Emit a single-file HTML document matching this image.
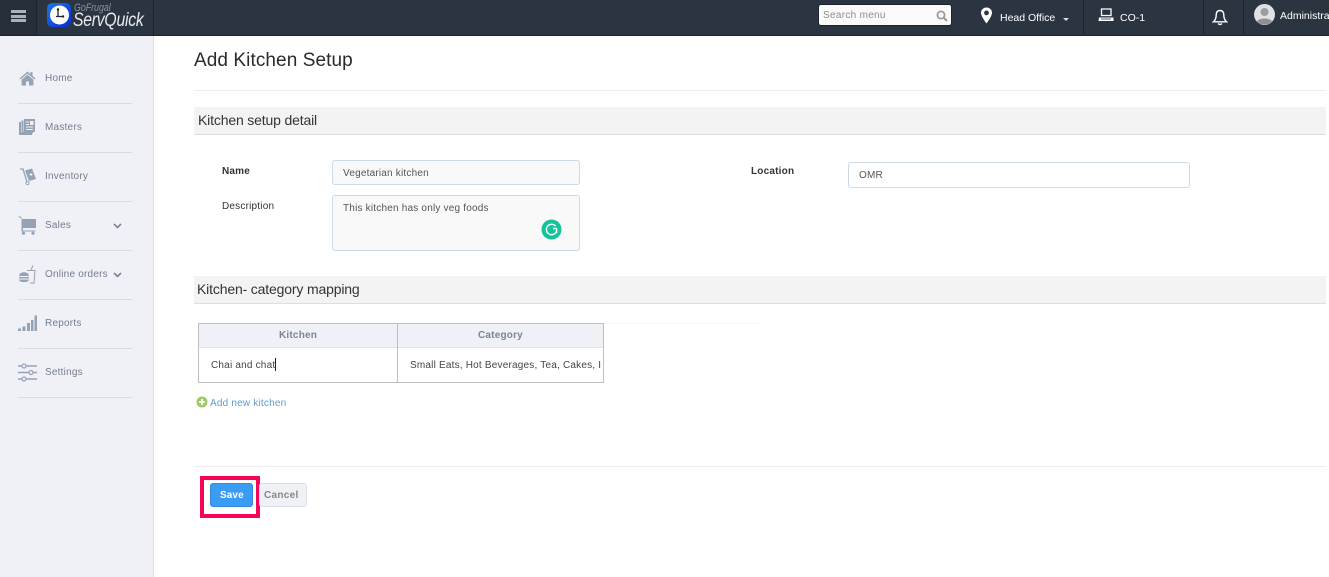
<!DOCTYPE html>
<html><head><meta charset="utf-8"><style>
html,body{margin:0;padding:0;width:1329px;height:577px;overflow:hidden;background:#fff;font-family:"Liberation Sans",sans-serif}
.a{position:absolute;white-space:nowrap}
.box{position:absolute;box-sizing:border-box}
.nav{position:absolute;left:45px;margin-top:1px;font-size:10px;letter-spacing:.22px;color:#747d90;line-height:12px;white-space:nowrap}
.sep{position:absolute;left:18px;width:114px;height:1px;background:#d9dde3}
.t{margin-top:1px;font-size:10px;letter-spacing:.2px;line-height:12px;color:#444}
.h{font-size:14px;letter-spacing:-.16px;line-height:16px;color:#333}
svg{position:absolute;overflow:visible}
</style></head><body>
<!-- top bar -->
<div class="box" style="left:0;top:0;width:1329px;height:36px;background:#2b3542;border-bottom:1px solid #1c232c"></div>
<div class="box" style="left:0;top:0;width:37px;height:35px;background:#252e39;border-right:1px solid #1c232c"></div>
<div class="box" style="left:153px;top:0;width:1px;height:35px;background:#1c232c"></div>
<div class="box" style="left:11px;top:10px;width:15px;height:3px;background:#a9b0b8"></div>
<div class="box" style="left:11px;top:14.5px;width:15px;height:3px;background:#a9b0b8"></div>
<div class="box" style="left:11px;top:19px;width:15px;height:3px;background:#a9b0b8"></div>
<div class="box" style="left:47px;top:3px;width:24px;height:24px;border-radius:5px;background:linear-gradient(135deg,#1b78e8,#0a2ad0)"></div>
<svg style="left:47px;top:3px" width="24" height="24" viewBox="0 0 24 24"><circle cx="12.5" cy="12" r="9.5" fill="#fff"/><path d="M11 6.5V13.5H16M9 13.5H13" stroke="#222" stroke-width="1.3" fill="none"/><circle cx="11" cy="6.5" r="1.2" fill="#222"/><circle cx="16" cy="13.5" r="1.2" fill="#222"/></svg>
<div class="a" style="left:74px;top:2px;font-size:11px;font-style:italic;color:#8b939c;line-height:13px;transform:scaleX(.8);transform-origin:0 0">GoFrugal</div>
<div class="a" style="left:73px;top:10px;font-size:19px;font-style:italic;color:#e8eaec;line-height:22px;letter-spacing:-.3px;transform:scaleX(.83);transform-origin:0 0">ServQuick</div>
<div class="box" style="left:818px;top:4px;width:134px;height:22px;background:#fafafa;border:1px solid #1c232c;border-radius:3px"></div>
<div class="a" style="left:823px;top:10px;font-size:10px;letter-spacing:.3px;line-height:12px;color:#8d8d8d">Search menu</div>
<svg style="left:936px;top:10px" width="12" height="12" viewBox="0 0 12 12"><circle cx="5" cy="5" r="3.6" fill="none" stroke="#999" stroke-width="1.7"/><path d="M7.6 7.6L11 11" stroke="#999" stroke-width="2"/></svg>
<svg style="left:980px;top:7px" width="13" height="17" viewBox="0 0 13 17"><path fill-rule="evenodd" fill="#fff" d="M6.5 0.5C3.2 0.5 1 3 1 5.8C1 9.5 6.5 16.5 6.5 16.5S12 9.5 12 5.8C12 3 9.8 0.5 6.5 0.5ZM6.5 3.5A2.4 2.4 0 1 1 6.5 8.3A2.4 2.4 0 1 1 6.5 3.5Z"/></svg>
<div class="a" style="left:1000px;top:12px;font-size:10.5px;line-height:12px;color:#fff">Head Office</div>
<svg style="left:1063px;top:18px" width="7" height="4"><path d="M0 0H6L3 3Z" fill="#ddd"/></svg>
<div class="box" style="left:1083px;top:0;width:1px;height:34px;background:#1c232c"></div>
<svg style="left:1098px;top:8px" width="17" height="14" viewBox="0 0 17 14"><path d="M3.5 1H13V7.5H3.5Z" fill="none" stroke="#fff" stroke-width="1.3"/><path d="M1 9.5H15.5V13H0.5Z" fill="#fff"/><path d="M3 11H13" stroke="#2b3542" stroke-width=".8"/></svg>
<div class="a" style="left:1120px;top:12px;font-size:10.5px;line-height:12px;color:#fff">CO-1</div>
<div class="box" style="left:1203px;top:0;width:1px;height:34px;background:#1c232c"></div>
<svg style="left:1212px;top:9px" width="16" height="17" viewBox="0 0 16 17"><path d="M8 1.5C5.3 1.5 4.2 3.5 4.2 6C4.2 9 3.5 11 1.5 12.8H14.5C12.5 11 11.8 9 11.8 6C11.8 3.5 10.7 1.5 8 1.5Z" fill="none" stroke="#fff" stroke-width="1.4"/><path d="M6 14.5Q8 16.5 10 14.5" fill="none" stroke="#fff" stroke-width="1.3"/></svg>
<div class="box" style="left:1243px;top:0;width:1px;height:34px;background:#1c232c"></div>
<svg style="left:1254px;top:4px" width="21" height="21" viewBox="0 0 21 21"><circle cx="10.5" cy="10.5" r="10.5" fill="#dfe1e3"/><circle cx="10.5" cy="8" r="4" fill="#9a9ea3"/><path d="M3 17.5C5 13.5 16 13.5 18 17.5A10.5 10.5 0 0 1 3 17.5Z" fill="#8d9196"/></svg>
<div class="a" style="left:1280px;top:10px;font-size:10.5px;line-height:12px;color:#fff">Administrator</div>
<!-- sidebar -->
<div class="box" style="left:0;top:36px;width:154px;height:541px;background:#eff1f7;border-right:1px solid #dcdfe6"></div>
<svg style="left:19px;top:71px" width="17" height="15" viewBox="0 0 17 15"><path d="M8.5 0.5L0.5 7.5L1.5 8.5L8.5 2.5L15.5 8.5L16.5 7.5L13.5 4.8V1H11.5V3L8.5 0.5ZM8.5 3.6L2.6 8.7V14.5H7V10.5H10V14.5H14.4V8.7Z" fill="#95a3b5"/></svg>
<div class="nav" style="top:72px">Home</div><div class="sep" style="top:103px"></div>
<svg style="left:18px;top:118px" width="18" height="18" viewBox="0 0 18 18"><path d="M1 4H3V15H14V17H1Z" fill="#95a3b5"/><path d="M3.5 2.5H5.5V14H15V15.5H3.5Z" fill="#95a3b5"/><path d="M6 1H17V14H6Z" fill="#95a3b5"/><path d="M8 4H11M8 6.5H11M8 9H15M8 11.5H15" stroke="#eff1f7" stroke-width="1"/><path d="M12 3H15.5V7H12Z" fill="#eff1f7"/></svg>
<div class="nav" style="top:121px">Masters</div><div class="sep" style="top:152px"></div>
<svg style="left:19px;top:166px" width="18" height="20" viewBox="0 0 18 20"><path d="M1 3H4L8 16" fill="none" stroke="#95a3b5" stroke-width="1.3"/><circle cx="8.5" cy="17" r="1.6" fill="none" stroke="#95a3b5"/><path d="M6 4.5L13 2.5L17 13L10 15Z" fill="#95a3b5"/><path d="M10.5 8.5H13.5M12 7V10" stroke="#eff1f7"/></svg>
<div class="nav" style="top:170px">Inventory</div><div class="sep" style="top:201px"></div>
<svg style="left:18px;top:216px" width="19" height="19" viewBox="0 0 19 19"><path d="M0.5 0.5H3L4 3H18V12H5V14.5H17.5V15.5H3.5V3.5L2.5 1.5H0.5Z" fill="#95a3b5"/><circle cx="5.5" cy="17.2" r="1.6" fill="#95a3b5"/><circle cx="15" cy="17.2" r="1.6" fill="#95a3b5"/></svg>
<div class="nav" style="top:219px">Sales</div>
<svg style="left:113px;top:223px" width="9" height="6"><path d="M1 1L4.5 4.5L8 1" fill="none" stroke="#7b8496" stroke-width="1.6"/></svg>
<div class="sep" style="top:250px"></div>
<svg style="left:18px;top:265px" width="19" height="19" viewBox="0 0 19 19"><path d="M1 11C1 6 11 6 11 11ZM1 12H11V13.5H1ZM1 14.5H11C11 18 1 18 1 14.5Z" fill="#95a3b5"/><path d="M9 5.5H17L16 18H12" fill="none" stroke="#95a3b5" stroke-width="1"/><path d="M13 5L15 0.5" stroke="#95a3b5"/></svg>
<div class="nav" style="top:268px">Online orders</div>
<svg style="left:113px;top:272px" width="9" height="6"><path d="M1 1L4.5 4.5L8 1" fill="none" stroke="#7b8496" stroke-width="1.6"/></svg>
<div class="sep" style="top:299px"></div>
<svg style="left:18px;top:315px" width="19" height="17" viewBox="0 0 19 17"><path d="M0 13.5H3V16H0ZM4.5 11.5H7.5V16H4.5ZM9 8H12V16H9ZM13 5H15.5V16H13ZM16.5 0.5H19V16H16.5Z" fill="#95a3b5"/></svg>
<div class="nav" style="top:317px">Reports</div><div class="sep" style="top:348px"></div>
<svg style="left:18px;top:363px" width="19" height="18" viewBox="0 0 19 18"><path d="M0 3H19M0 9.5H19M0 16H19" stroke="#95a3b5" stroke-width="1.6"/><circle cx="6" cy="3" r="2" fill="#eff1f7" stroke="#95a3b5" stroke-width="1.2"/><circle cx="13" cy="9.5" r="2" fill="#eff1f7" stroke="#95a3b5" stroke-width="1.2"/><circle cx="6" cy="16" r="2" fill="#eff1f7" stroke="#95a3b5" stroke-width="1.2"/></svg>
<div class="nav" style="top:366px">Settings</div><div class="sep" style="top:397px"></div>
<!-- content -->
<div class="a" style="left:194px;top:49px;font-size:19px;letter-spacing:.08px;line-height:24px;color:#2a2a2a">Add Kitchen Setup</div>
<div class="box" style="left:194px;top:90px;width:1132px;height:1px;background:#ececec"></div>
<div class="box" style="left:194px;top:107px;width:1132px;height:28px;background:#f3f3f3;border-bottom:1px solid #dedede"></div>
<div class="a h" style="left:198px;top:112px">Kitchen setup detail</div>
<div class="a t" style="left:222px;top:165px;font-weight:bold;color:#333">Name</div>
<div class="box" style="left:332px;top:160px;width:248px;height:25px;background:#f9f9f9;border:1px solid #ccdae8;border-radius:3px"></div>
<div class="a t" style="left:343px;top:167px;color:#555">Vegetarian kitchen</div>
<div class="a t" style="left:222px;top:200px;color:#333">Description</div>
<div class="box" style="left:332px;top:195px;width:248px;height:56px;background:#f9f9f9;border:1px solid #ccdae8;border-radius:3px"></div>
<div class="a t" style="left:343px;top:202px;color:#555">This kitchen has only veg foods</div>
<svg style="left:541px;top:219px" width="21" height="21" viewBox="0 0 21 21"><circle cx="10.5" cy="10.5" r="10" fill="#15c39a"/><path d="M14.6 7.2A5.2 5.2 0 1 0 15.4 12.5M15.6 9.5H12M15.6 9.5V14" fill="none" stroke="#fff" stroke-width="1.4"/></svg>
<div class="a t" style="left:751px;top:165px;font-weight:bold;color:#333">Location</div>
<div class="box" style="left:848px;top:162px;width:342px;height:26px;background:#fff;border:1px solid #ccdae8;border-radius:3px"></div>
<div class="a t" style="left:859px;top:169px;color:#555">OMR</div>
<div class="box" style="left:194px;top:276px;width:1132px;height:28px;background:#f3f3f3;border-bottom:1px solid #dedede"></div>
<div class="a h" style="left:197px;top:281px">Kitchen- category mapping</div>
<!-- table -->
<div class="box" style="left:604px;top:323px;width:156px;height:1px;background:#f6f6f6"></div>
<div class="box" style="left:198px;top:323px;width:406px;height:60px;background:#fff;border:1px solid #bfbfbf;overflow:hidden">
<div class="box" style="left:0;top:0;width:404px;height:24px;background:#eff1f7;border-bottom:1px solid #dfe3ea"></div>
<div class="box" style="left:198px;top:0;width:1px;height:58px;background:#bfbfbf"></div>
<div class="a t" style="left:80px;top:5px;font-weight:bold;color:#7b8496">Kitchen</div>
<div class="a t" style="left:279px;top:5px;font-weight:bold;color:#7b8496">Category</div>
<div class="a t" style="left:12px;top:35px;color:#444">Chai and chat</div>
<div class="box" style="left:76px;top:34px;width:1px;height:13px;background:#222"></div>
<div class="a t" style="left:211px;top:35px;color:#444;width:191px;overflow:hidden">Small Eats, Hot Beverages, Tea, Cakes, Ice Creams</div>
</div>
<svg style="left:196px;top:396px" width="12" height="12" viewBox="0 0 12 12"><circle cx="6" cy="6" r="5.5" fill="#9ccb62"/><path d="M6 3V9M3 6H9" stroke="#fff" stroke-width="1.8"/></svg>
<div class="a t" style="left:210px;top:397px;color:#5b9bd5">Add new kitchen</div>
<div class="box" style="left:194px;top:466px;width:1132px;height:1px;background:#ececec"></div>
<div class="box" style="left:200px;top:476px;width:60px;height:42px;border:4px solid #f5045a"></div>
<div class="box" style="left:210px;top:483px;width:43px;height:24px;background:#3a9cf2;border:1px solid #2f8bdc;border-radius:3px"></div>
<div class="a" style="left:220px;top:490px;font-size:10px;font-weight:bold;letter-spacing:.1px;line-height:12px;color:#fff">Save</div>
<div class="box" style="left:259px;top:483px;width:48px;height:24px;background:#eff1f7;border:1px solid #dcdfe6;border-radius:3px"></div>
<div class="a" style="left:264px;top:490px;font-size:10px;font-weight:bold;letter-spacing:.3px;line-height:12px;color:#888">Cancel</div>
</body></html>
